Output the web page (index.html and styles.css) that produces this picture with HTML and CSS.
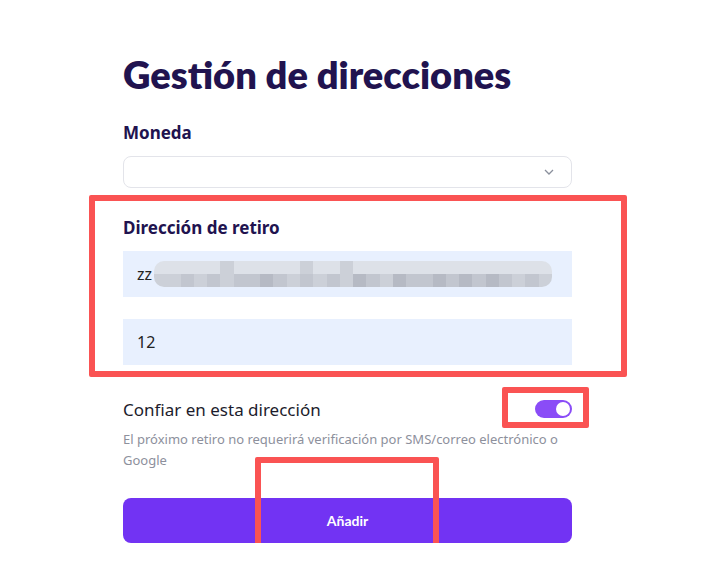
FILE: index.html
```html
<!DOCTYPE html>
<html lang="es">
  <head>
    <meta charset="UTF-8" />
    <meta name="viewport" content="width=device-width, initial-scale=1.0" />
    <title>Gestión de direcciones</title>
    <link rel="stylesheet" href="styles.css">
  </head>
  <body>
    <main class="page">
      <h1 class="title">Gestión de direcciones</h1>

      <label class="label">Moneda</label>
      <div class="select">
        <svg class="chevron" width="10" height="6" viewBox="0 0 10 6">
          <path d="M1 1l4 4 4-4" fill="none" stroke="#8a8f9c" stroke-width="1.3" />
        </svg>
      </div>

      <section class="mark mark-address">
        <label class="label">Dirección de retiro</label>
        <div class="field">
          <span class="field-text">zz</span>
          <div class="mosaic">
            <div class="mosaic-row">
              <span class="c1"></span><span class="c1"></span><span class="c1"></span><span class="c1"></span><span class="c1"></span><span class="c2"></span><span class="c1"></span><span class="c1"></span><span class="c1"></span><span class="c1"></span><span class="c1"></span><span class="c2"></span><span class="c1"></span><span class="c1"></span><span class="c2"></span><span class="c1"></span><span class="c1"></span><span class="c1"></span><span class="c1"></span><span class="c1"></span><span class="c1"></span><span class="c1"></span><span class="c1"></span><span class="c1"></span><span class="c1"></span><span class="c1"></span><span class="c1"></span><span class="c1"></span><span class="c1"></span><span class="c1"></span>
            </div>
            <div class="mosaic-row">
              <span class="c2"></span><span class="c2"></span><span class="c3"></span><span class="c2"></span><span class="c3"></span><span class="c2"></span><span class="c3"></span><span class="c3"></span><span class="c4"></span><span class="c3"></span><span class="c2"></span><span class="c3"></span><span class="c2"></span><span class="c3"></span><span class="c2"></span><span class="c4"></span><span class="c3"></span><span class="c2"></span><span class="c4"></span><span class="c3"></span><span class="c3"></span><span class="c4"></span><span class="c3"></span><span class="c4"></span><span class="c3"></span><span class="c4"></span><span class="c3"></span><span class="c2"></span><span class="c3"></span><span class="c2"></span>
            </div>
          </div>
        </div>
        <div class="field">
          <span class="field-text">12</span>
        </div>
      </section>

      <div class="trust">
        <span class="trust-label">Confiar en esta dirección</span>
        <span class="mark mark-toggle">
          <span class="toggle"><span class="knob"></span></span>
        </span>
      </div>
      <p class="hint">El próximo retiro no requerirá verificación por SMS/correo electrónico o Google</p>

      <div class="actions">
        <button class="btn">Añadir</button>
        <span class="mark mark-button"></span>
      </div>
    </main>
  </body>
</html>
```

FILE: styles.css
```css
* {
  box-sizing: border-box;
}

body {
  margin: 0;
  background: #ffffff;
  font-family: "Noto Sans", "Open Sans", Arial, sans-serif;
  color: #1c1640;
}

.page {
  width: 449px;
  margin-left: 123px;
  padding-top: 50px;
  position: relative;
}

.title {
  margin: 0;
  font-family: Lato, "Noto Sans", Arial, sans-serif;
  font-size: 38px;
  font-weight: 800;
  line-height: 48px;
  color: #21134f;
}

.label {
  display: block;
  font-size: 17px;
  font-weight: 700;
  color: #21134f;
  line-height: 22px;
}

.page > .label {
  margin-top: 24px;
}

.select {
  margin-top: 12px;
  height: 32px;
  border: 1px solid #e3e4ea;
  border-radius: 8px;
  display: flex;
  align-items: center;
  justify-content: flex-end;
  padding-right: 17px;
}

.mark {
  position: relative;
}

.mark::after {
  content: "";
  position: absolute;
  border: 6px solid #fa5353;
  border-radius: 2px;
  pointer-events: none;
}

.mark-address {
  padding-top: 29px;
}

.mark-address::after {
  left: -34px;
  right: -55px;
  top: 7px;
  bottom: -12px;
}

.mark-address .label {
  margin-bottom: 12px;
}

.field {
  height: 46px;
  background: #e8f0fe;
  display: flex;
  align-items: center;
  padding-left: 14px;
  font-size: 16px;
  color: #222;
  margin-bottom: 22px;
}

.field:last-child {
  margin-bottom: 0;
}

.mosaic {
  margin-left: 2px;
  width: 398px;
  display: flex;
  flex-direction: column;
  border-radius: 10px;
  overflow: hidden;
}

.mosaic-row {
  display: flex;
  height: 13px;
}

.mosaic-row span {
  flex: 1;
}

.c1 { background: #dde1e8; }
.c2 { background: #ccd0d8; }
.c3 { background: #c2c6cf; }
.c4 { background: #b6bac4; }

.trust {
  margin-top: 33px;
  display: flex;
  align-items: center;
  justify-content: space-between;
  height: 22px;
}

.trust-label {
  font-size: 17px;
  color: #1c1c2c;
}

.mark-toggle {
  display: flex;
}

.mark-toggle::after {
  left: -33px;
  right: -17px;
  top: -13px;
  bottom: -10px;
}

.toggle {
  width: 37px;
  height: 18px;
  border-radius: 9px;
  background: #8a4cf7;
  display: flex;
  align-items: center;
  justify-content: flex-end;
  padding-right: 2px;
}

.knob {
  width: 14px;
  height: 14px;
  border-radius: 50%;
  background: #ffffff;
}

.hint {
  margin: 9px 0 0;
  font-size: 13px;
  line-height: 21px;
  color: #8d909c;
}

.actions {
  margin-top: 27px;
  position: relative;
}

.btn {
  display: block;
  width: 100%;
  height: 45px;
  border: none;
  border-radius: 8px;
  background: #7233f3;
  color: #ffffff;
  font-family: Lato, "Noto Sans", Arial, sans-serif;
  font-size: 14px;
  font-weight: 700;
}

.mark-button {
  position: absolute;
  left: 132px;
  top: -41px;
  width: 184px;
  height: 96px;
}

.mark-button::after {
  inset: 0;
}
```
